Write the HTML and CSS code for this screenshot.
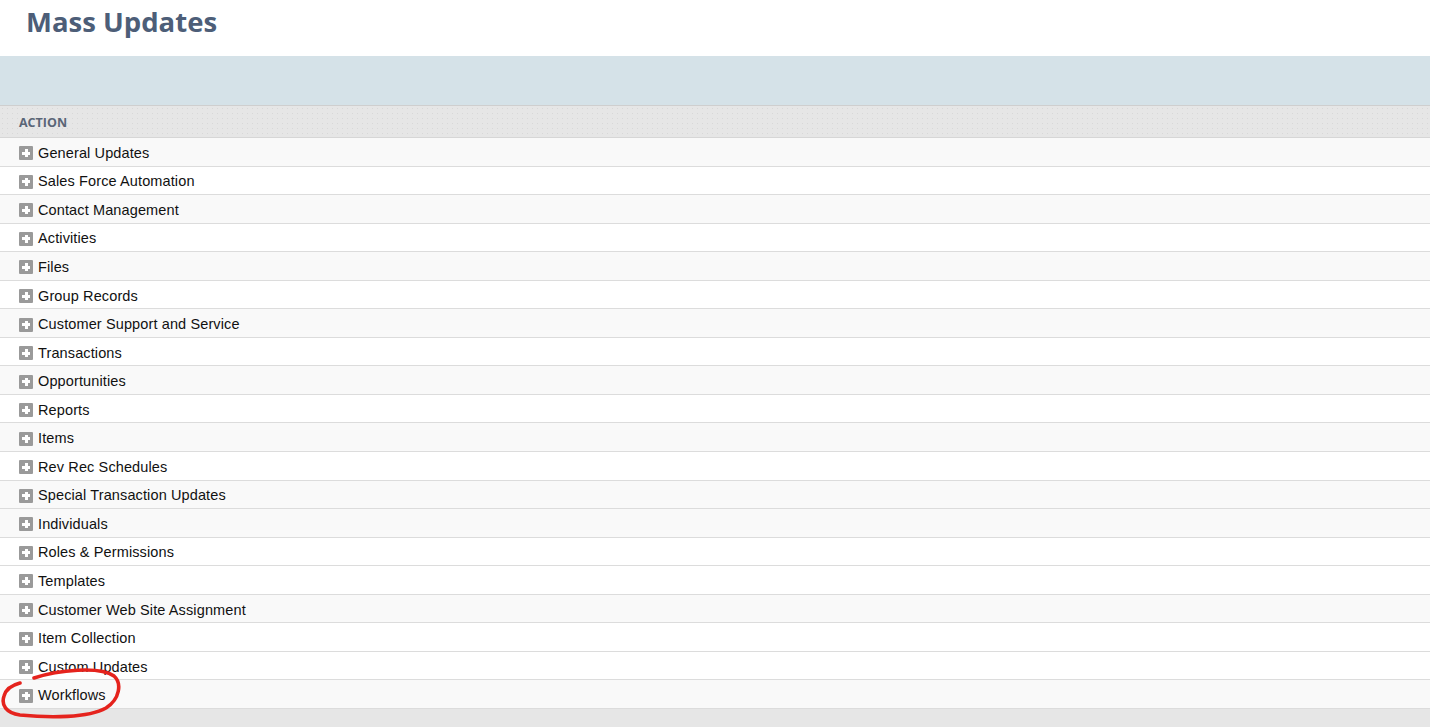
FILE: index.html
```html
<!DOCTYPE html>
<html>
<head>
<meta charset="utf-8">
<link rel="stylesheet" href="styles.css">
</head>
<body>
<div class="page">
  <header class="title-bar"><h1 class="title">Mass Updates</h1></header>
  <div class="band"></div>
  <div class="table">
    <div class="thead">ACTION</div>
    <div class="row gray"><span class="plus"></span>General Updates</div>
    <div class="row"><span class="plus"></span>Sales Force Automation</div>
    <div class="row gray"><span class="plus"></span>Contact Management</div>
    <div class="row"><span class="plus"></span>Activities</div>
    <div class="row gray"><span class="plus"></span>Files</div>
    <div class="row"><span class="plus"></span>Group Records</div>
    <div class="row gray"><span class="plus"></span>Customer Support and Service</div>
    <div class="row"><span class="plus"></span>Transactions</div>
    <div class="row gray"><span class="plus"></span>Opportunities</div>
    <div class="row"><span class="plus"></span>Reports</div>
    <div class="row gray"><span class="plus"></span>Items</div>
    <div class="row"><span class="plus"></span>Rev Rec Schedules</div>
    <div class="row gray"><span class="plus"></span>Special Transaction Updates</div>
    <div class="row gray"><span class="plus"></span>Individuals</div>
    <div class="row"><span class="plus"></span>Roles &amp; Permissions</div>
    <div class="row"><span class="plus"></span>Templates</div>
    <div class="row gray"><span class="plus"></span>Customer Web Site Assignment</div>
    <div class="row"><span class="plus"></span>Item Collection</div>
    <div class="row"><span class="plus"></span>Custom Updates</div>
    <div class="row gray"><span class="plus"></span>Workflows</div>
  </div>
  <div class="footer"></div>
  <svg class="annot" width="130" height="62" viewBox="0 665 130 62">
    <path d="M 34 678 C 58 670, 100 666, 114 676 C 122 683, 120 699, 106 708 C 88 718, 50 718, 20 715 C 6 713, 1 705, 4 696 C 6 689, 12 685, 20 683" fill="none" stroke="#e5231d" stroke-width="3.6" stroke-linecap="round"/>
  </svg>
</div>
</body>
</html>
```
FILE: styles.css
```css
html, body {
  margin: 0;
  padding: 0;
  background: #ffffff;
}
.page {
  position: relative;
  width: 1430px;
  height: 727px;
  overflow: hidden;
  font-family: "Liberation Sans", Arial, sans-serif;
}
.title-bar {
  height: 56px;
  box-sizing: border-box;
  padding: 3px 0 0 26px;
}
.title {
  margin: 0;
  font-family: "Open Sans", sans-serif;
  font-weight: 700;
  font-size: 27.5px;
  line-height: 38px;
  color: #4d5e78;
}
.band {
  height: 49px;
  background: #d5e2e8;
  border-bottom: 1px solid #cfcfcf;
}
.thead {
  height: 32px;
  box-sizing: border-box;
  border-bottom: 1px solid #d6d6d6;
  background-color: #e6e6e6;
  background-image: radial-gradient(circle, #d8d8d8 0.6px, transparent 0.8px);
  background-size: 5px 5px;
  padding: 1px 0 0 19px;
  display: flex;
  align-items: center;
  font-family: "Open Sans", sans-serif;
  font-weight: 700;
  font-size: 12.5px;
  color: #5a6577;
}
.row {
  height: 28.55px;
  box-sizing: border-box;
  border-bottom: 1px solid #dcdcdc;
  background: #ffffff;
  display: flex;
  align-items: center;
  padding: 2px 0 0 19px;
  gap: 5px;
  font-size: 14.5px;
  letter-spacing: 0.12px;
  color: #111111;
}
.row.gray {
  background: #f9f9f9;
}
.plus {
  position: relative;
  width: 14px;
  height: 14px;
  background: #9a9a9a;
  border-radius: 1px;
  flex: none;
  margin-top: 1px;
}
.plus::before,
.plus::after {
  content: "";
  position: absolute;
  background: #ffffff;
}
.plus::before {
  left: 3px;
  top: 5.5px;
  width: 8px;
  height: 3px;
}
.plus::after {
  left: 5.5px;
  top: 3px;
  width: 3px;
  height: 8px;
}
.footer {
  height: 30px;
  background: #e6e6e6;
}
.annot {
  position: absolute;
  left: 0;
  top: 665px;
}
```
